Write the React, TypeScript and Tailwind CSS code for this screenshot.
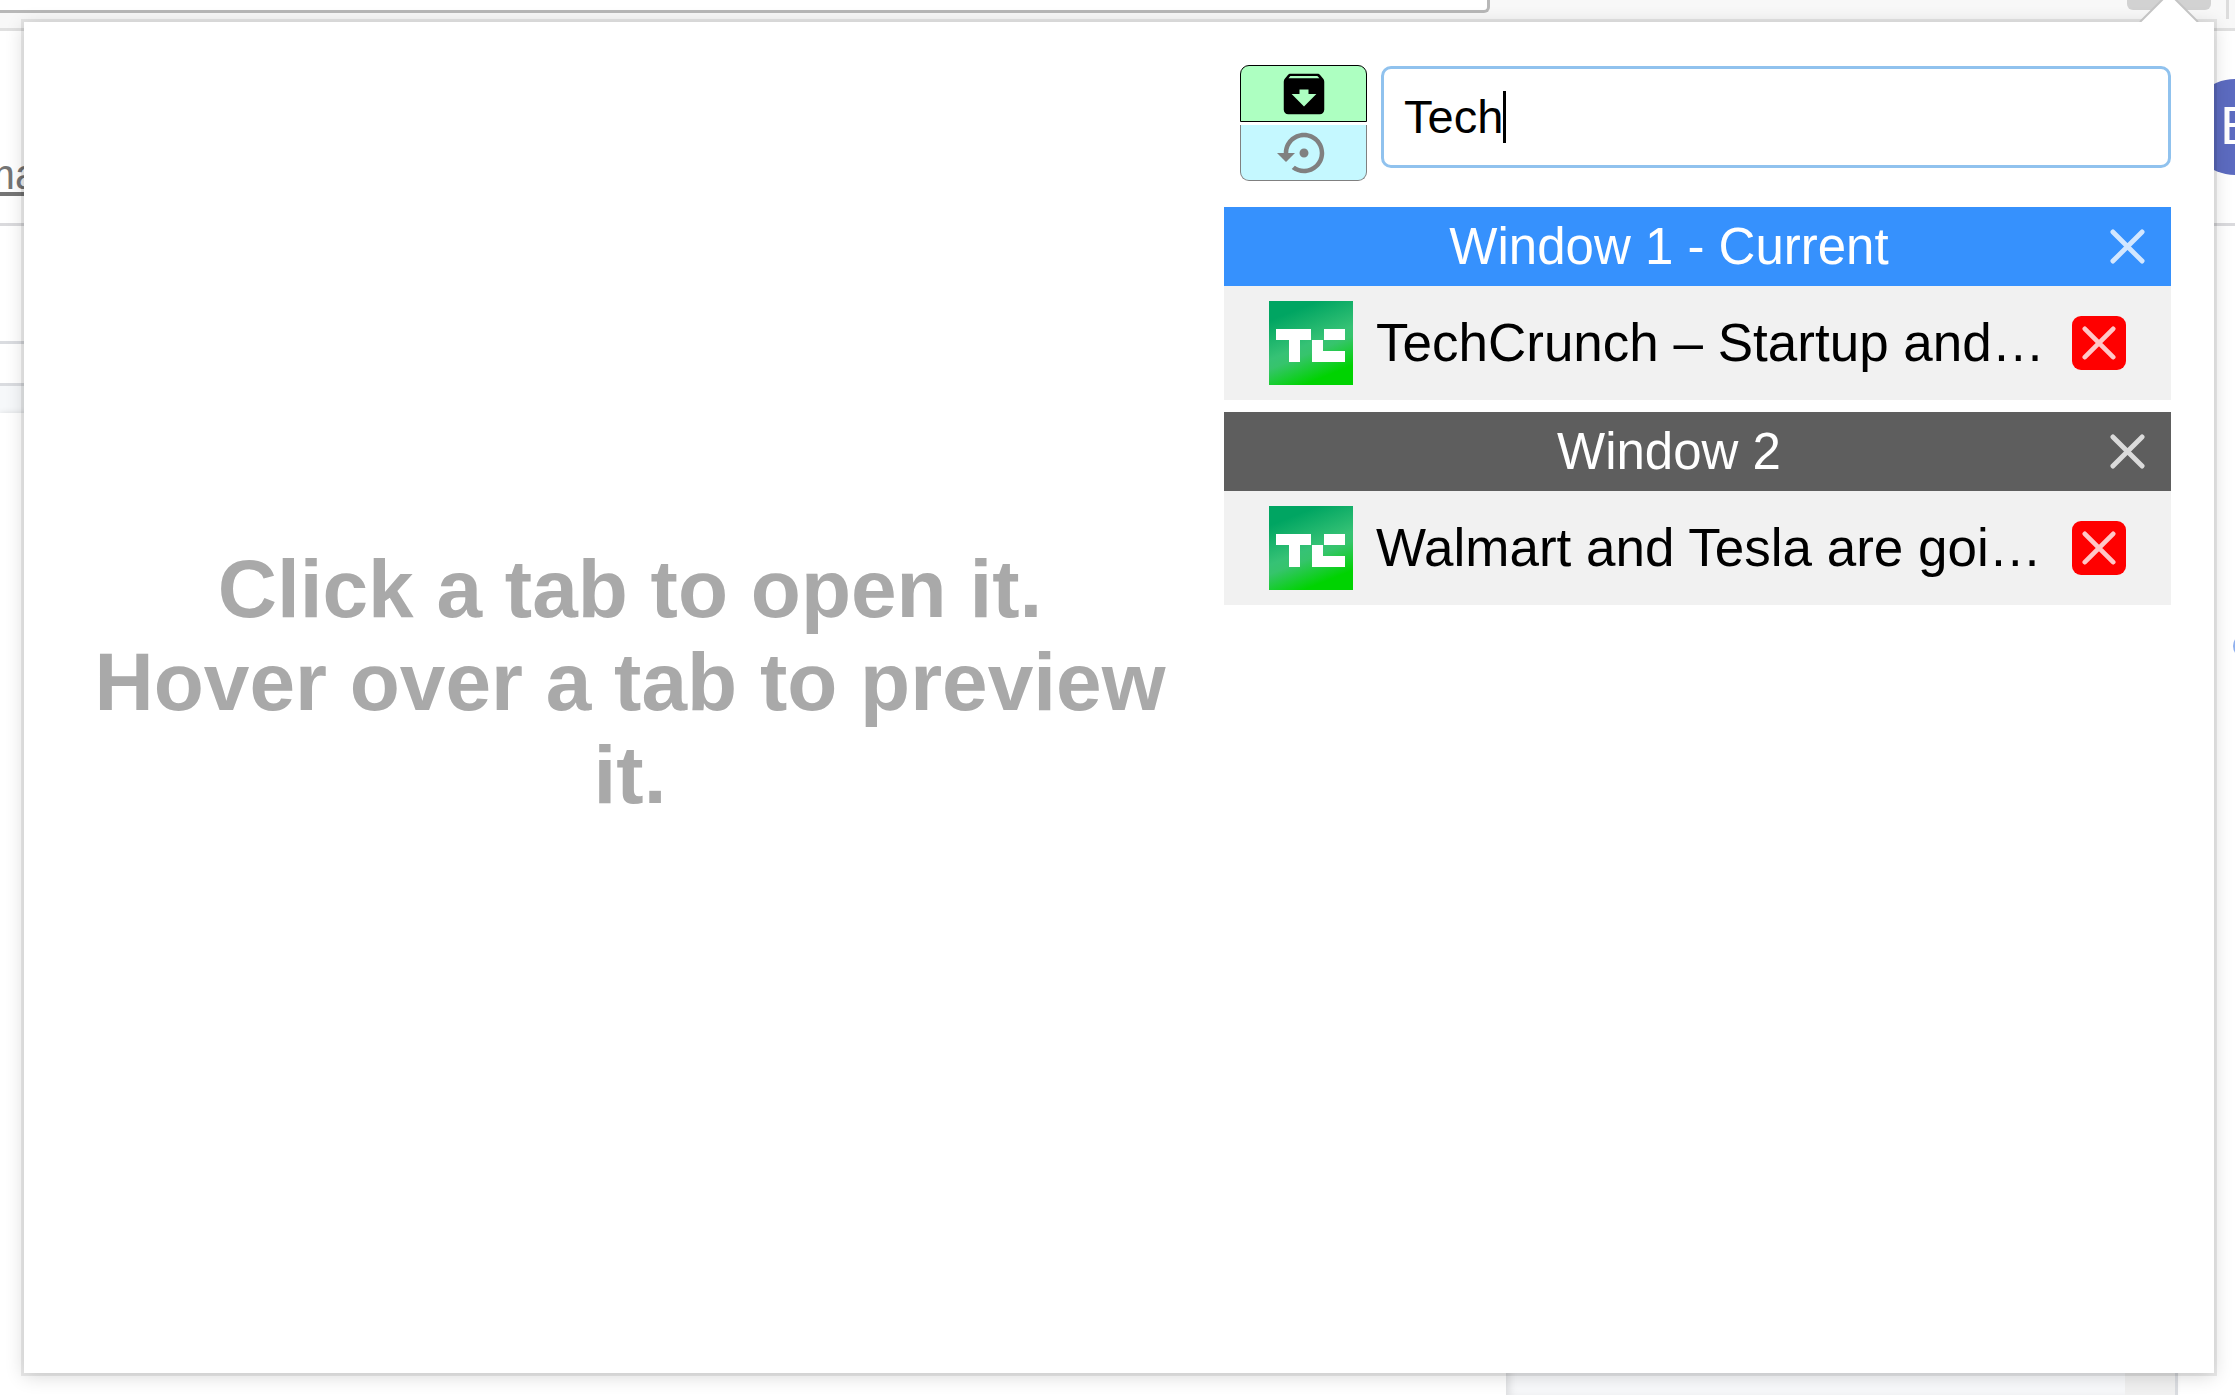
import { useState } from "react";

type TabEntry = { id: number; title: string };
type WindowEntry = { id: number; name: string; current: boolean; tabs: TabEntry[] };

const windows: WindowEntry[] = [
  {
    id: 1,
    name: "Window 1 - Current",
    current: true,
    tabs: [{ id: 11, title: "TechCrunch – Startup and…" }],
  },
  {
    id: 2,
    name: "Window 2",
    current: false,
    tabs: [{ id: 21, title: "Walmart and Tesla are goi…" }],
  },
];

function ArchiveIcon() {
  return (
    <svg viewBox="0 0 24 24" className="size-[54px]" fill="currentColor" aria-hidden="true">
      <path d="M20.54 5.23l-1.39-1.68C18.88 3.21 18.47 3 18 3H6c-.47 0-.88.21-1.16.55L3.46 5.23C3.17 5.57 3 6.02 3 6.5V19c0 1.1.9 2 2 2h14c1.1 0 2-.9 2-2V6.5c0-.48-.17-.93-.46-1.27zM12 17.5L6.5 12H10v-2h4v2h3.5L12 17.5zM5.12 5l.81-1h12l.94 1H5.12z" />
    </svg>
  );
}

function RestoreIcon() {
  return (
    <svg viewBox="0 0 24 24" className="size-[54px]" fill="currentColor" aria-hidden="true">
      <path d="M14 12c0-1.1-.9-2-2-2s-2 .9-2 2 .9 2 2 2 2-.9 2-2zm-2-9c-4.97 0-9 4.03-9 9H0l4 4 4-4H5c0-3.87 3.13-7 7-7s7 3.13 7 7-3.13 7-7 7c-1.51 0-2.91-.49-4.06-1.3l-1.42 1.44C8.04 20.3 9.94 21 12 21c4.97 0 9-4.03 9-9s-4.03-9-9-9z" />
    </svg>
  );
}

function CrossIcon({ className }: { className: string }) {
  return (
    <svg viewBox="0 0 36 36" className={className} aria-hidden="true">
      <path d="M3 3L33 33M33 3L3 33" stroke="#fff" strokeOpacity="0.78" strokeWidth="5" strokeLinecap="round" />
    </svg>
  );
}

function SiteLogo() {
  return (
    <svg viewBox="0 0 84 84" className="size-[84px] shrink-0" role="img" aria-label="TechCrunch">
      <defs>
        <linearGradient id="tc" x1="0.3" y1="0" x2="0.7" y2="1">
          <stop offset="0.1" stopColor="#00a562" />
          <stop offset="0.5" stopColor="#36c275" />
          <stop offset="0.6" stopColor="#36c46c" />
          <stop offset="0.9" stopColor="#00d301" />
        </linearGradient>
      </defs>
      <rect width="84" height="84" fill="url(#tc)" />
      <path fill="#fff" d="M7 28H42V39H31V61H20V39H7zM55 28H76V39H55zM43 39H54V50H76V61H43z" />
    </svg>
  );
}

function BrowserBackdrop() {
  return (
    <div className="absolute inset-0 flex flex-col overflow-hidden bg-white" aria-hidden="true">
      <div className="flex h-[31px] shrink-0 items-start border-b-3 border-[#e0e0e0] bg-[#f8f8f8]">
        <div className="h-[13px] w-2/3 rounded-br-md border-r-3 border-b-3 border-[#b8b8b8] bg-white" />
        <div className="mr-[15px] ml-auto h-[10px] w-[84px] rounded-b-md bg-[#d2d2d2]" />
        <div className="mr-[6px] h-[19px] w-[3px] bg-[#dcdcdc]" />
      </div>
      <div className="flex h-[195px] shrink-0 items-center justify-between border-b-3 border-[#dadadd]">
        <span className="-ml-5 self-end pb-6 text-[42px] leading-[48px] text-[#757575] underline">ma</span>
        <div className="-mr-12 flex size-24 shrink-0 items-center justify-center rounded-full bg-[#5c6bc0] font-[Roboto] text-[52px] text-white">
          E
        </div>
      </div>
      <div className="flex flex-1">
        <div className="flex flex-1 flex-col">
          <div className="h-[118px] border-b-3 border-[#dadce0]" />
          <div className="h-[42px] border-b-3 border-[#dadce0]" />
          <div className="h-[27px] bg-[#f6f8fa]" />
          <div className="flex flex-1 shadow-[0_0_6px_rgba(0,0,0,0.12)]">
            <div className="flex-1" />
            <div className="w-[619px] bg-[#f8f9fb] shadow-[inset_6px_0_9px_-3px_rgba(0,0,0,0.12)]" />
            <div className="w-[50px] bg-[#f0f0f0]" />
          </div>
        </div>
        <div className="flex w-[60px] justify-end border-l-3 border-[#dadce0] pt-[408px]">
          <div className="-mr-[22px] size-6 shrink-0 rounded-full bg-[#8fb0ee]" />
        </div>
      </div>
    </div>
  );
}

function WindowGroup({ entry }: { entry: WindowEntry }) {
  return (
    <section>
      <header
        className={
          entry.current
            ? "flex h-[79px] items-center bg-[#3691fd] px-[15px]"
            : "flex h-[79px] items-center bg-[#5e5e5e] px-[15px]"
        }
      >
        <h2 className="flex-1 text-center text-[51px] leading-[79px] text-white">{entry.name}</h2>
        <button type="button" aria-label={`Close ${entry.name}`} className="flex size-[57px] items-center justify-center">
          <CrossIcon className="size-[35px]" />
        </button>
      </header>
      <ul>
        {entry.tabs.map((tab) => (
          <li key={tab.id} className="flex h-[114px] items-center bg-[#f1f1f1] px-[45px]">
            <SiteLogo />
            <span className="min-w-0 flex-1 pl-[23px] text-[53px] leading-[66px] whitespace-nowrap text-black">
              {tab.title}
            </span>
            <button
              type="button"
              aria-label={`Close ${tab.title}`}
              className="flex size-[54px] shrink-0 items-center justify-center rounded-[9px] bg-[#ff0000]"
            >
              <CrossIcon className="size-[34px]" />
            </button>
          </li>
        ))}
      </ul>
    </section>
  );
}

export default function App() {
  const [query, setQuery] = useState("Tech");

  return (
    <div className="relative flex min-h-screen overflow-hidden pt-[22px] pr-[21px] pb-[22px] pl-6 font-['Liberation_Sans',Arial,sans-serif]">
      <BrowserBackdrop />
      <main className="relative flex flex-1 bg-white shadow-[0_0_0_3px_rgba(0,0,0,0.08),0_3px_18px_rgba(0,0,0,0.16)]">
        <svg viewBox="0 0 60 30" className="absolute -top-[30px] right-[15px] h-[30px] w-[60px]" aria-hidden="true">
          <path d="M1 30L30 1L59 30z" fill="#fff" />
          <path d="M1 30L30 1L59 30" fill="none" stroke="#c4c4c4" strokeWidth="2" />
        </svg>

        <section className="flex flex-1 items-center justify-center pb-8 pl-3">
          <h1 className="text-center text-[82px] leading-[93px] font-bold text-[#a9a9a9]">
            Click a tab to open it.
            <br />
            Hover over a tab to preview
            <br />
            it.
          </h1>
        </section>

        <section className="flex w-[990px] flex-col pt-[43px] pr-[43px]">
          <div className="flex items-start gap-[14px] pb-[26px] pl-4">
            <div className="flex w-[127px] shrink-0 flex-col gap-[3px]">
              <button
                type="button"
                aria-label="Save session"
                className="flex h-[57px] items-center justify-center rounded-t-[9px] border border-black bg-[#adffc1] text-black"
              >
                <ArchiveIcon />
              </button>
              <button
                type="button"
                aria-label="Restore session"
                className="flex h-[56px] items-center justify-center rounded-b-[9px] border border-t-0 border-[#808080] bg-[#c5f8ff] text-[#808080]"
              >
                <RestoreIcon />
              </button>
            </div>
            <div className="relative mt-px min-w-0 flex-1">
              <input
                type="text"
                aria-label="Search tabs"
                value={query}
                onChange={(event) => setQuery(event.target.value)}
                className="h-[102px] w-full rounded-[10px] border-3 border-[#90c2ee] bg-white px-5 pb-0.5 text-[47px] text-black outline-none"
              />
              <span className="pointer-events-none absolute top-[25px] left-[122px] h-[52px] w-[3px] bg-black" />
            </div>
          </div>

          <div className="flex flex-col gap-3">
            {windows.map((entry) => (
              <WindowGroup key={entry.id} entry={entry} />
            ))}
          </div>
        </section>
      </main>
    </div>
  );
}
